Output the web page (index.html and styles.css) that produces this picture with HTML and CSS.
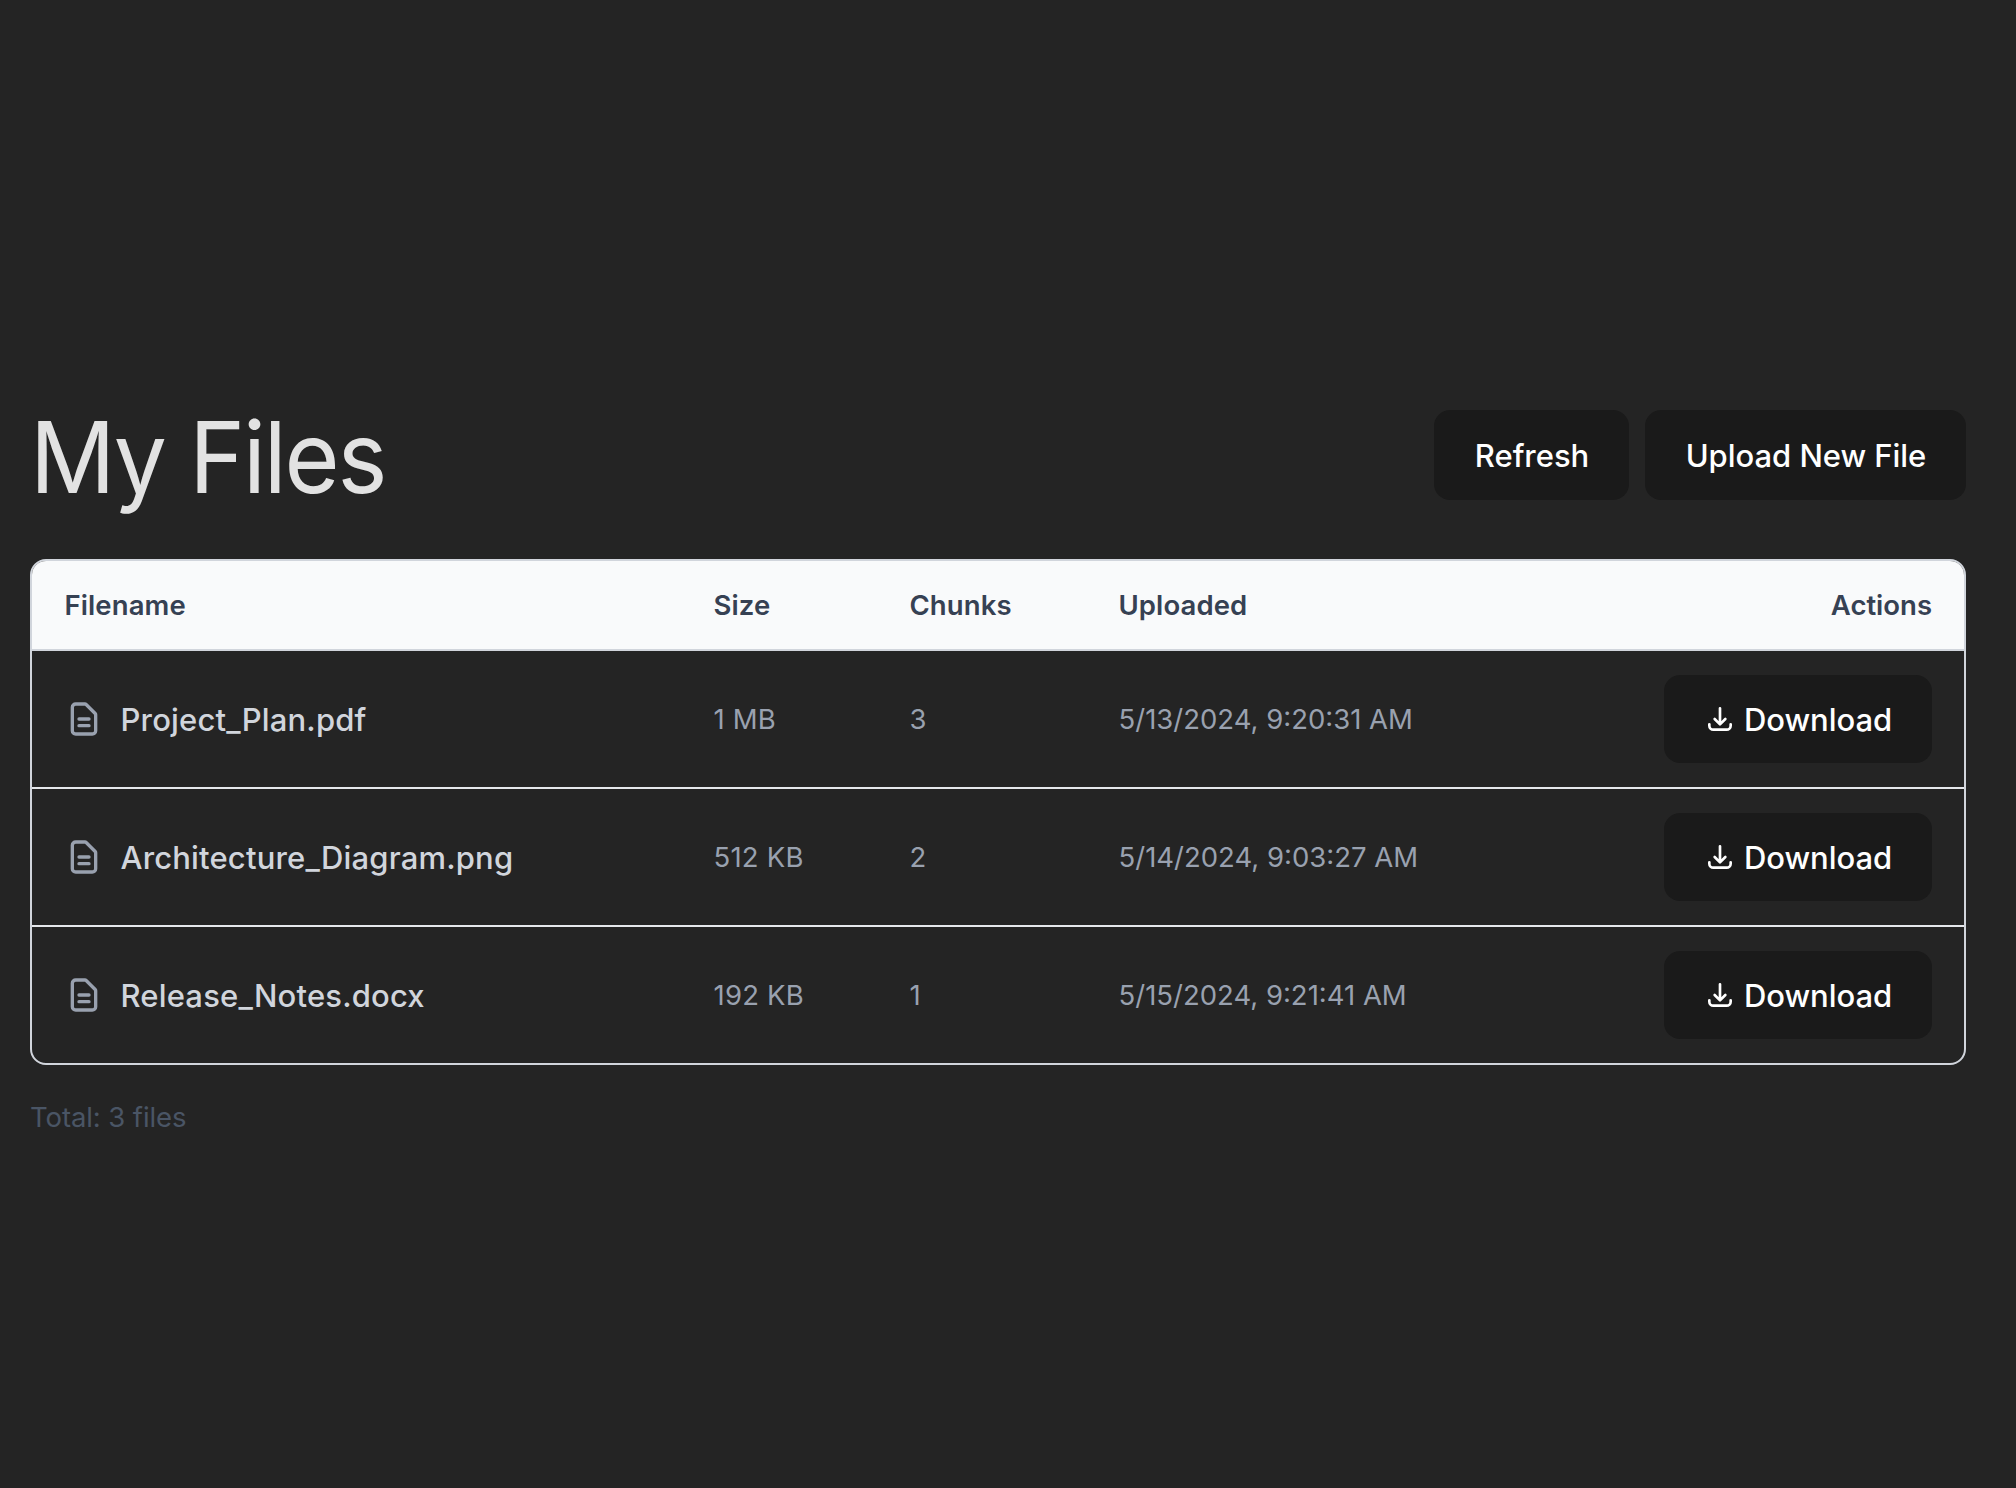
FILE: index.html
```html
<!DOCTYPE html>
<html lang="en">
<head>
<meta charset="utf-8">
<title>My Files</title>
<link rel="stylesheet" href="styles.css">
</head>
<body>
<svg class="sprite" aria-hidden="true">
  <symbol id="icon-file" viewBox="0 0 24 24"><path d="M9 12h6m-6 4h6m2 5H7a2 2 0 01-2-2V5a2 2 0 012-2h5.586a1 1 0 01.707.293l5.414 5.414a1 1 0 01.293.707V19a2 2 0 01-2 2z"/></symbol>
  <symbol id="icon-download" viewBox="0 0 24 24"><path d="M4 16v1a3 3 0 003 3h10a3 3 0 003-3v-1m-4-4l-4 4m0 0l-4-4m4 4V4"/></symbol>
</svg>
<main class="page">
  <header class="toolbar">
    <h1 class="title">My Files</h1>
    <div class="toolbar-actions">
      <button class="button button-refresh">Refresh</button>
      <button class="button button-upload">Upload New File</button>
    </div>
  </header>
  <section class="table">
    <div class="row head">
      <div>Filename</div>
      <div>Size</div>
      <div>Chunks</div>
      <div>Uploaded</div>
      <div class="actions">Actions</div>
    </div>
    <div class="row">
      <div class="file"><svg class="icon-file"><use href="#icon-file"/></svg><span class="name">Project_Plan.pdf</span></div>
      <div class="size">1 MB</div>
      <div>3</div>
      <div>5/13/2024, 9:20:31 AM</div>
      <div class="actions"><button class="button download"><svg class="icon-download"><use href="#icon-download"/></svg><span>Download</span></button></div>
    </div>
    <div class="row">
      <div class="file"><svg class="icon-file"><use href="#icon-file"/></svg><span class="name">Architecture_Diagram.png</span></div>
      <div class="size">512 KB</div>
      <div>2</div>
      <div>5/14/2024, 9:03:27 AM</div>
      <div class="actions"><button class="button download"><svg class="icon-download"><use href="#icon-download"/></svg><span>Download</span></button></div>
    </div>
    <div class="row">
      <div class="file"><svg class="icon-file"><use href="#icon-file"/></svg><span class="name">Release_Notes.docx</span></div>
      <div class="size">192 KB</div>
      <div>1</div>
      <div>5/15/2024, 9:21:41 AM</div>
      <div class="actions"><button class="button download"><svg class="icon-download"><use href="#icon-download"/></svg><span>Download</span></button></div>
    </div>
  </section>
  <p class="total">Total: 3 files</p>
</main>
</body>
</html>
```
FILE: styles.css
```css
* { box-sizing: border-box; }

body {
  margin: 0;
  background: #242424;
  color: rgba(255, 255, 255, 0.87);
  font-family: Inter, "Liberation Sans", sans-serif;
}

.sprite { display: none; }

.page { padding: 399px 50px 0 30px; }

.toolbar {
  display: flex;
  align-items: center;
  justify-content: space-between;
  height: 112px;
  margin-bottom: 48px;
}

.title {
  margin: 0;
  padding-top: 4px;
  font-size: 99.5px;
  font-weight: 400;
  line-height: 112px;
  letter-spacing: -2.2px;
  transform: scaleX(0.95);
  transform-origin: left center;
}

.toolbar-actions { display: flex; gap: 16px; }

.button {
  display: flex;
  align-items: center;
  justify-content: center;
  height: 90px;
  padding: 1px 0 0 1px;
  border: 0;
  border-radius: 16px;
  background: #1a1a1a;
  color: #fff;
  font-family: inherit;
  font-size: 31px;
  font-weight: 500;
  line-height: 48px;
  letter-spacing: -0.04px;
  white-space: nowrap;
}

.button-refresh { width: 195px; }
.button-upload { width: 321px; }

.table {
  overflow: hidden;
  border: 2px solid #d1d5dc;
  border-radius: 16px;
}

.row {
  display: grid;
  grid-template-columns: 649px 196px 209px 1fr 332px;
  align-items: center;
  height: 138px;
  border-bottom: 2px solid #e5e7eb;
  color: #99a1af;
  font-size: 27.5px;
  line-height: 40px;
}

.row:last-child { height: 136px; border-bottom: 0; }
.row > div { padding: 0 31.5px 0 32.5px; }

.head {
  height: 90px;
  border-bottom-color: #d1d5dc;
  background: #f9fafb;
  color: #364153;
  font-weight: 600;
  letter-spacing: 0.1px;
}

.head > .actions { letter-spacing: 0; }

.row > .actions { display: flex; justify-content: flex-end; padding: 0 32px; }

.size { letter-spacing: 0.2px; }

.row > .file { display: flex; align-items: center; gap: 16.5px; padding-left: 32px; }

.name {
  padding-top: 2px;
  color: #d1d5dc;
  font-size: 31px;
  font-weight: 500;
  letter-spacing: 0.17px;
}

.icon-file,
.icon-download {
  fill: none;
  stroke: currentColor;
  stroke-width: 2;
  stroke-linecap: round;
  stroke-linejoin: round;
}

.icon-file { width: 40px; height: 40px; }
.icon-download { width: 32px; height: 32px; }

.download { width: 268px; height: 88px; padding: 0; gap: 8px; }
.download span { padding-top: 1px; }

.total {
  margin: 32px 0 0;
  color: #4a5565;
  font-size: 27.5px;
  line-height: 40px;
  letter-spacing: -0.1px;
}
```
